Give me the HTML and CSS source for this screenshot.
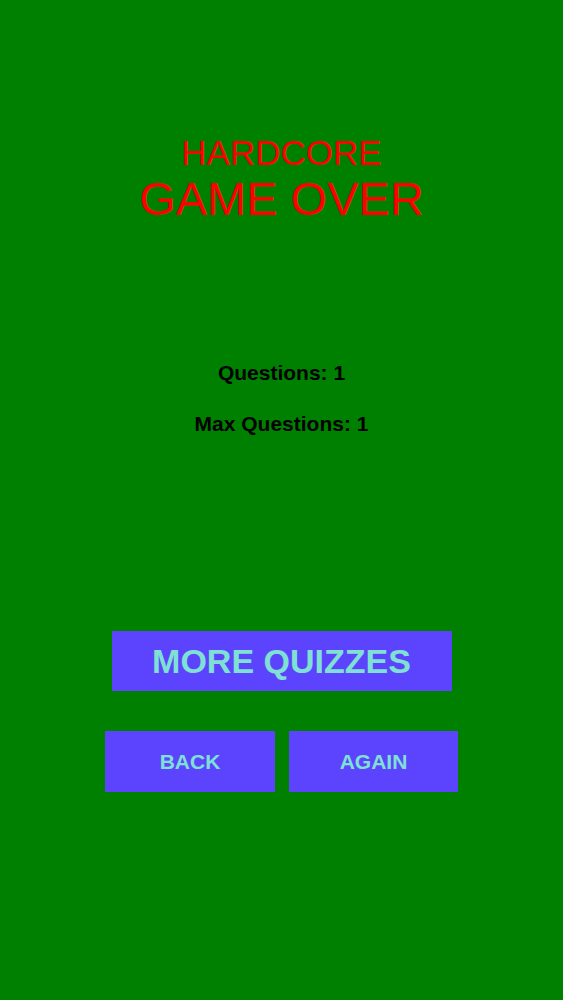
FILE: index.html
```html
<!DOCTYPE html>
<html lang="en">
<head>
  <meta charset="UTF-8" />
  <meta name="viewport" content="width=device-width, initial-scale=1.0" />
  <title>Hardcore - Game Over</title>
  <link rel="stylesheet" href="styles.css">
</head>
<body>
  <div class="screen">
    <header class="title">
      <div class="mode">HARDCORE</div>
      <h1>GAME OVER</h1>
    </header>

    <section class="stats">
      <p>Questions: 1</p>
      <p>Max Questions: 1</p>
    </section>

    <div class="actions">
      <button class="btn btn-big">MORE QUIZZES</button>
      <div class="row">
        <button class="btn">BACK</button>
        <button class="btn">AGAIN</button>
      </div>
    </div>
  </div>
</body>
</html>
```

FILE: styles.css
```css
:root {
  --bg: #008000;
  --title: #ff0000;
  --btn-bg: #5c44ff;
  --btn-text: #7fe0d4;
}

body {
  margin: 0;
  background: var(--bg);
  font-family: 'Liberation Sans', Arial, Helvetica, sans-serif;
}

.screen {
  height: 1000px;
  display: flex;
  flex-direction: column;
  align-items: center;
  padding-top: 135px;
  box-sizing: border-box;
}

.title {
  text-align: center;
  color: var(--title);
}
.mode {
  font-size: 35px;
  line-height: 35px;
}
h1 {
  margin: 5px 0 0;
  font-size: 47px;
  line-height: 47px;
  font-weight: normal;
}

.stats {
  margin-top: 140px;
  display: flex;
  flex-direction: column;
  align-items: center;
  gap: 30px;
}
.stats p {
  margin: 0;
  font-size: 21px;
  line-height: 21px;
  font-weight: bold;
  color: #000;
}

.actions {
  margin-top: 197px;
  display: flex;
  flex-direction: column;
  align-items: center;
  gap: 40px;
}

.btn {
  border: none;
  background: var(--btn-bg);
  color: var(--btn-text);
  font-family: inherit;
  font-weight: bold;
  font-size: 21px;
  height: 61px;
  padding: 0;
  cursor: pointer;
}
.btn-big {
  width: 340px;
  height: 60px;
  font-size: 34px;
}

.row {
  display: grid;
  grid-template-columns: 170px 169px;
  gap: 14px;
}
```
